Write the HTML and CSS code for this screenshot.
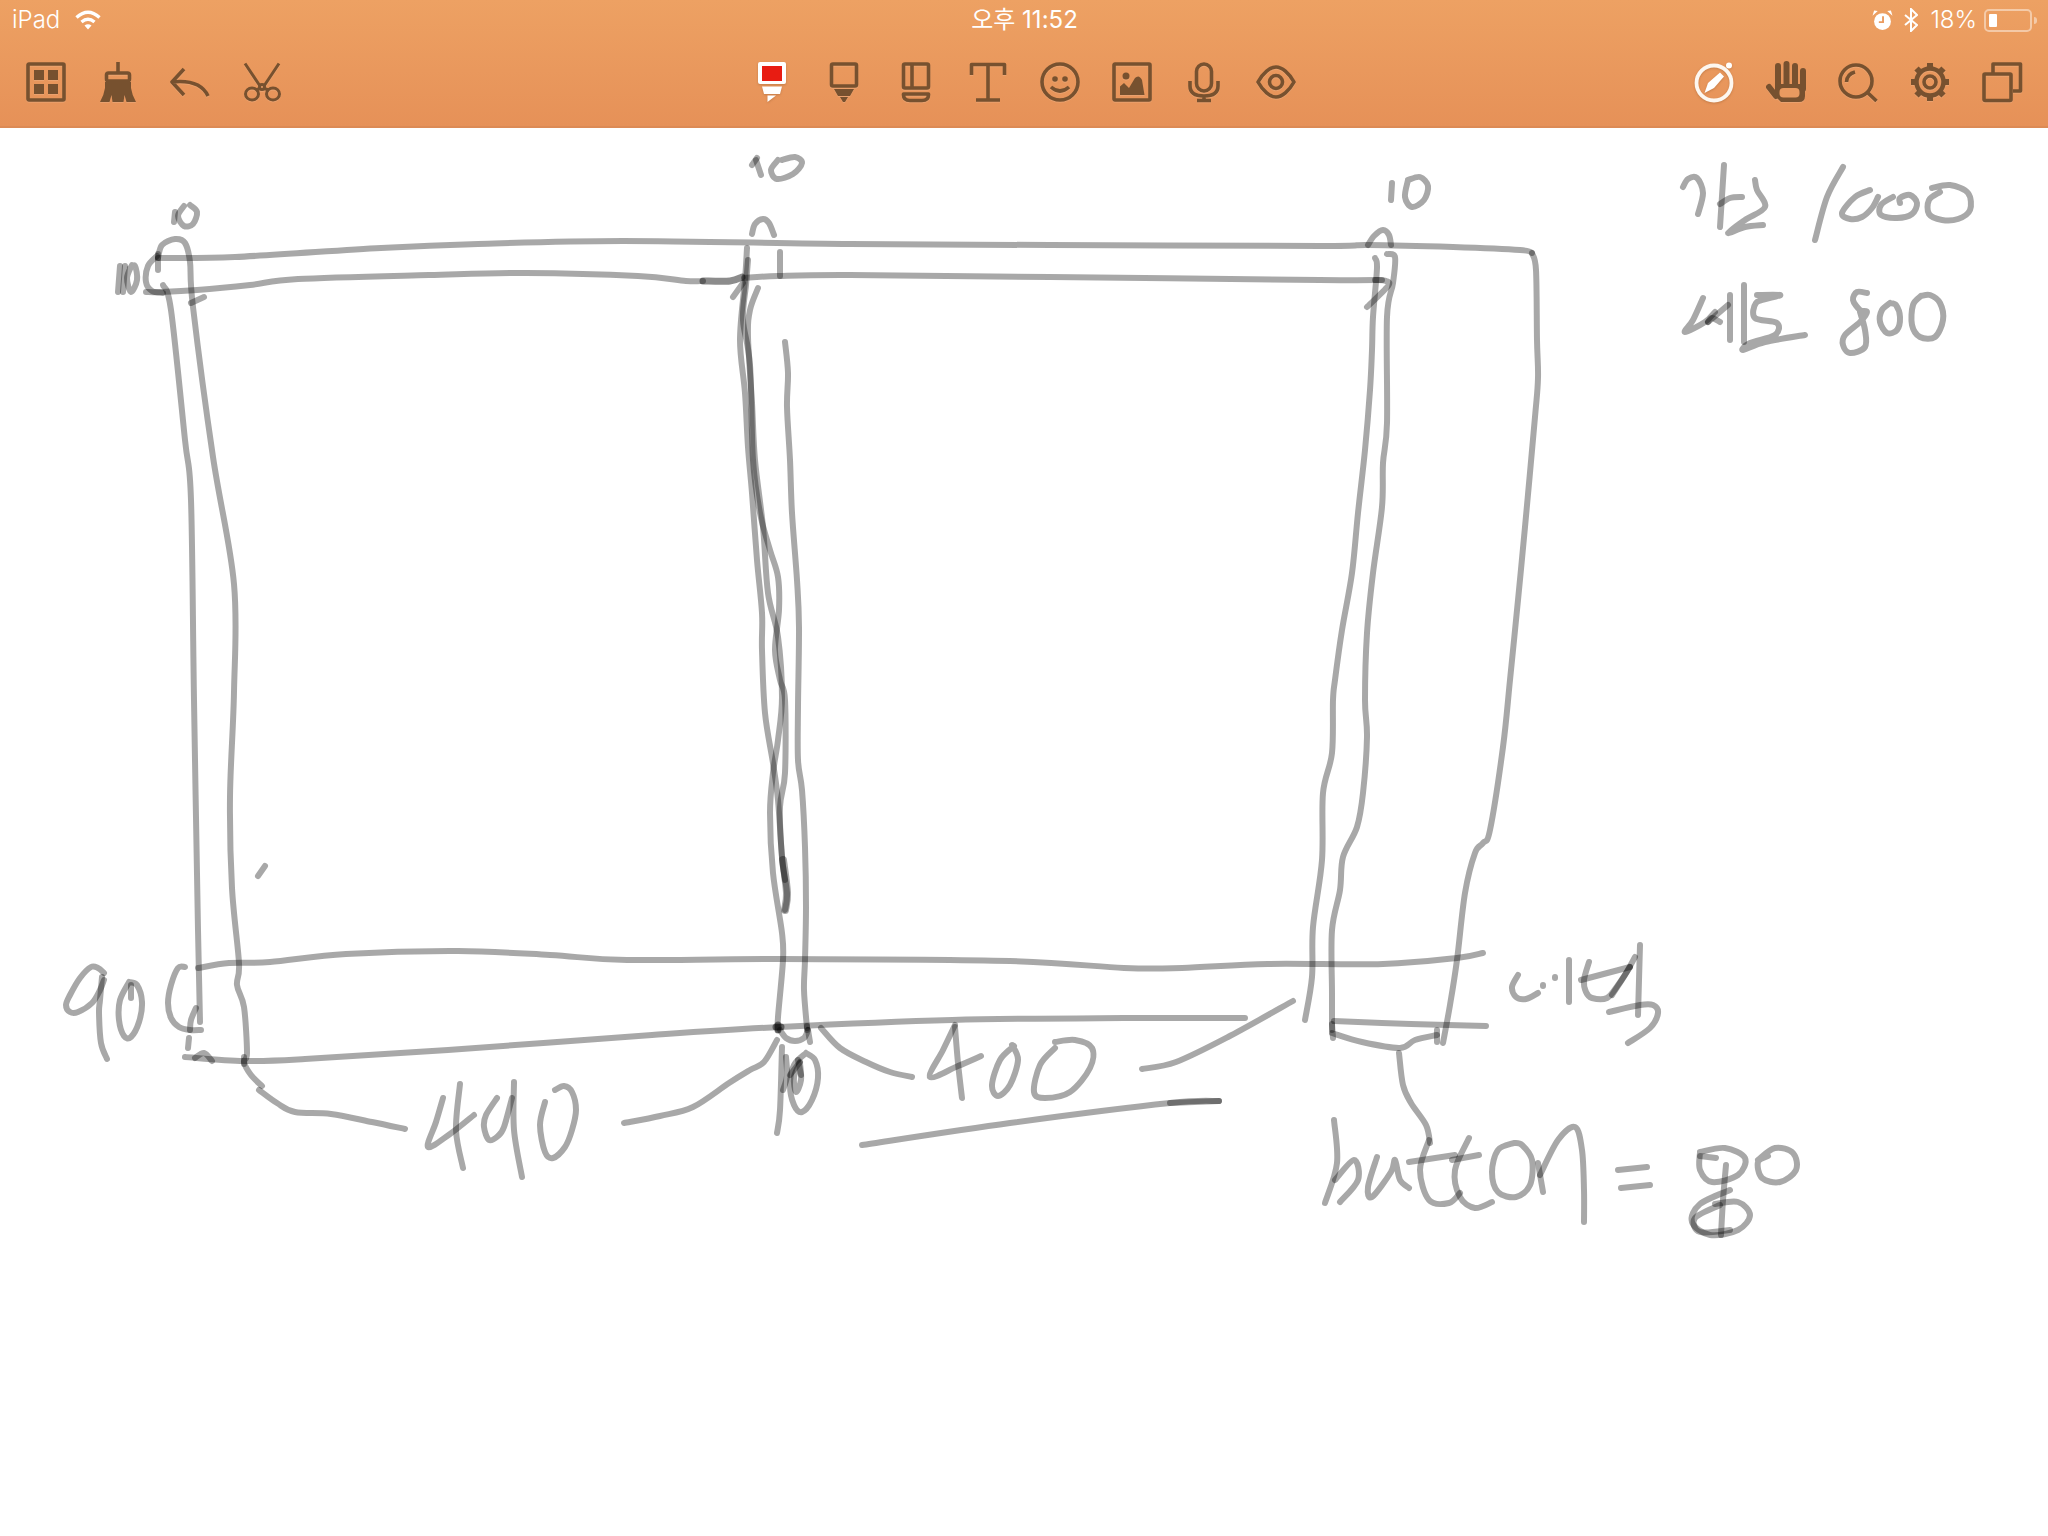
FILE: index.html
```html
<!DOCTYPE html>
<html lang="ko">
<head>
<meta charset="utf-8">
<title>Note</title>
<link rel="stylesheet" href="styles.css">
</head>
<body>
<header class="appbar">
  <div class="status">
    <div class="status-left">
      <span class="status-text">iPad</span>
      <svg class="wifi" viewBox="0 0 28 20"><path class="wifi-arc" d="M2.5 7.5Q14-3 25.500 7.500"/><path class="wifi-arc" d="M7.500 12Q14 6.500 20.500 12"/><path class="wifi-dot" d="M10.500 15.500Q14 13 17.500 15.500L14 19.500Z"/></svg>
    </div>
    <div class="status-text status-time">오후 11:52</div>
    <div class="status-right">
      <svg class="alarm" viewBox="0 0 20 20"><circle class="wh" cx="10" cy="11" r="8"/><path class="wh" d="M0.500 5.500L5.500 1 2 0.500ZM19.500 5.500L14.500 1 18 0.500Z"/><path class="alarm-hand" d="M10.500 6V11.500H6.500"/></svg>
      <svg class="bt" viewBox="0 0 14 24"><path d="M1 7L13 17 7 23V1L13 7 1 17"/></svg>
      <span class="status-text">18%</span>
      <div class="battery"><div class="battery-level"></div></div>
      <div class="battery-nub"></div>
    </div>
  </div>
  <div class="tools">
    <div class="tool-group">
      <button class="tool"><svg class="ic" viewBox="0 0 40 40"><rect x="2" y="2" width="36" height="36" rx="1"/><path class="solid" d="M8 8H18V18H8ZM22 8H32V18H22ZM8 22H18V32H8ZM22 22H32V32H22Z"/></svg></button>
      <button class="tool"><svg class="ic" viewBox="0 0 40 40"><path d="M20 0V10"/><rect x="8.500" y="11" width="23" height="8" rx="2"/><path class="solid" d="M7 20H33V26Q34 33 38 40H28.500L26.500 33 25.500 40H14.500L13.500 33 11.500 40H2Q6 33 7 26Z"/></svg></button>
      <button class="tool"><svg class="ic" viewBox="0 0 40 40"><path d="M14 7L2 20 14 33M2 20Q30 17 38 34"/></svg></button>
      <button class="tool"><svg class="ic ic-thin" viewBox="0 0 40 40"><path d="M3 1.500L18 24M37 1.500L22 24"/><circle cx="20" cy="25" r="2.500"/><ellipse cx="10" cy="32" rx="6.500" ry="6"/><ellipse cx="31" cy="32" rx="6.500" ry="6"/><path d="M18 26.500L13.500 28M22 26.500L27 28"/></svg></button>
    </div>
    <div class="tool-group">
      <button class="tool"><svg class="ic ic-active" viewBox="0 0 40 40"><rect class="wh" x="6" y="0" width="28" height="22" rx="2"/><rect class="red" x="10" y="4" width="20" height="15"/><path class="wh" d="M10 24.500H30L28 32H12ZM15.500 33.500H24L15.500 40Z"/></svg></button>
      <button class="tool"><svg class="ic" viewBox="0 0 40 40"><rect x="7.500" y="2" width="25" height="22" rx="1.500"/><path class="solid" d="M10 27H30L26 34H14ZM16 35H24L21 40H19Z"/></svg></button>
      <button class="tool"><svg class="ic" viewBox="0 0 40 40"><rect x="7.500" y="2" width="25" height="24" rx="1.500"/><path d="M16 2V26"/><path d="M7.500 32H32.500V33Q32.500 38.500 26 38.500H14Q7.500 38.500 7.500 33Z"/></svg></button>
      <button class="tool"><svg class="ic" viewBox="0 0 40 40"><path d="M3.500 13V2.500H36.500V13M20 2.500V38M8 38H32"/></svg></button>
      <button class="tool"><svg class="ic" viewBox="0 0 40 40"><circle cx="20" cy="20" r="18"/><circle class="solid" cx="15" cy="17" r="2.800"/><circle class="solid" cx="25" cy="17" r="2.800"/><path d="M11 25Q20 33 29 25"/></svg></button>
      <button class="tool"><svg class="ic" viewBox="0 0 40 40"><rect x="2" y="2" width="36" height="36" rx="1"/><circle class="solid" cx="14" cy="14" r="3.500"/><path class="solid" d="M8 33V24.500L12 21 17 26 23 16Q27 12 30 18L32.500 33Z"/></svg></button>
      <button class="tool"><svg class="ic" viewBox="0 0 40 40"><rect x="12.500" y="2" width="15" height="27" rx="7.500"/><path d="M6 19V24Q6 34 20 34 34 34 34 24V19M20 34V38.500M13 38.500H27"/></svg></button>
      <button class="tool"><svg class="ic" viewBox="0 0 40 40"><path d="M2 20C7 11 14 5 20 5 26 5 33 11 38 20 33 29 26 35 20 35 14 35 7 29 2 20Z"/><circle cx="20" cy="20" r="6.500"/></svg></button>
    </div>
    <div class="tool-group tool-group-end">
      <button class="tool"><svg class="ic ic-active" viewBox="0 0 40 40"><circle class="wh-ring" cx="20" cy="21" r="17.500"/><circle class="wh" cx="35" cy="3.500" r="3"/><path class="wh" d="M10.500 31L14 21 26 10.500 30 14.500 20 26Z"/></svg></button>
      <button class="tool"><svg class="ic" viewBox="0 0 40 40"><path class="finger" d="M12 4V26M20.500 2V26M29 4V26M37 9V27"/><path class="thumb" d="M3 25L10 34"/><path class="solid" d="M9 22H39V34Q39 40 33 40H15L9 34Z"/><rect class="palm" x="13.500" y="26" width="20" height="9.500" rx="4"/></svg></button>
      <button class="tool"><svg class="ic" viewBox="0 0 40 40"><circle cx="18" cy="19" r="16"/><path d="M30 31L38.500 39M8.500 20Q9 12 17 10"/></svg></button>
      <button class="tool"><svg class="ic" viewBox="0 0 40 40"><circle class="gear-ring" cx="20" cy="20" r="13.500"/><circle cx="20" cy="20" r="6"/><path class="gear-teeth" d="M20 1V6M20 34V39M1 20H6M34 20H39M6.500 6.500L10 10M30 30L33.500 33.500M33.500 6.500L30 10M10 30L6.500 33.500"/></svg></button>
      <button class="tool"><svg class="ic" viewBox="0 0 40 40"><rect x="2" y="12" width="27" height="26.500" rx="1"/><path d="M11 11V2H38.500V29H31"/></svg></button>
    </div>
  </div>
</header>
<main class="canvas">
<svg class="sketch" viewBox="0 128 2048 1408">
<!-- frame: outer top and second top rails -->
<path class="ink" data-p="158,258 235,257 381,248 478,244 623,241 850,244 1050,245 1320,246 1368,245 1453,247 1520,250 1532,253"/>
<path class="ink" data-p="1532,253 1536,270 1537,340 1538,378 1535,417 1525,527 1518,600 1510,680 1503,747 1490,830 1483,843 1475,853 1465,893 1457,960 1450,1005 1443,1043"/>
<path class="ink" data-p="146,292 160,292 197,290 250,285 298,279 429,275 526,273 638,276 686,281 703,281"/>
<path class="ink heavy" data-p="703,281 730,281 742,277"/>
<path class="ink" data-p="744,278 778,276 850,275 1050,277 1320,280 1382,280"/>
<path class="ink" data-p="1375,280 1386,281 1388,286 1367,307"/>
<!-- left rails and corner marks -->
<path class="ink" data-p="163,285 171,310 185,440 191,500 194,700 198,930 200,1022"/>
<path class="ink" data-p="158,258 162,245 175,239 185,243 190,262 193,307 213,457 234,584 234,692 230,797 232,888 239,963 237,985 244,1007 247,1053 244,1062 251,1075 262,1086"/>
<path class="ink" data-p="157,256 148,266 146,282 152,291 163,293"/>
<path class="ink" data-p="158,254 158,270"/>
<path class="ink" data-p="191,303 204,297"/>
<path class="ink" data-p="175,212 174,222"/>
<path class="ink" data-p="184,206 178,216 184,226 193,224 197,212 190,205"/>
<path class="ink" data-p="120,266 118,292"/>
<path class="ink" data-p="125,266 123,292"/>
<path class="ink" data-p="132,265 127,278 131,292 137,280 135,266 130,268"/>
<path class="ink" data-p="258,876 265,866"/>
<!-- middle rails -->
<path class="ink" data-p="756,160 761,175"/>
<path class="ink" data-p="752,165 757,158"/>
<path class="ink" data-p="778,160 771,170 777,179 793,174 802,163 795,157 782,160"/>
<path class="ink" data-p="752,234 755,224 763,219 769,223 774,235"/>
<path class="ink" data-p="780,252 780,276"/>
<path class="ink" data-p="747,248 745,280 740,340 745,393 748,447 752,493 757,560 762,613 762,650 765,713 773,763 778,800 782,857 785,880"/>
<path class="ink" data-p="748,260 746,285 743,320 750,365 753,460 760,513 770,550 778,577 779,610 775,650 780,680 785,700 785,773 780,807 782,857 787,893 785,910"/>
<path class="ink" data-p="758,288 750,310 748,337 752,403 755,460 763,527 768,593 778,637 782,697 778,740 773,773 770,813 773,873 782,933 783,960 778,1017 778,1030"/>
<path class="ink" data-p="785,342 788,373 787,407 790,460 792,513 797,580 799,627 798,707 798,760 802,790 805,847 806,907 805,960 804,990 807,1028"/>
<path class="ink thick" data-p="783,860 787,893 785,910"/>
<path class="ink" data-p="733,297 743,283"/>
<!-- third rails -->
<path class="ink" data-p="1392,183 1391,200"/>
<path class="ink" data-p="1408,180 1405,197 1412,207 1424,200 1428,186 1420,177 1408,180"/>
<path class="ink" data-p="1368,245 1374,236 1383,230 1389,235 1391,245"/>
<path class="ink" data-p="1375,258 1377,268 1373,317 1372,350 1370,390 1365,450 1358,513 1352,573 1342,630 1335,680 1333,700 1332,753 1323,793 1322,860 1313,927 1312,977 1305,1020"/>
<path class="ink" data-p="1387,254 1395,257 1393,283 1387,317 1387,423 1383,463 1382,507 1373,573 1367,633 1365,700 1367,737 1363,793 1357,827 1343,857 1340,890 1332,930 1332,993 1332,1030"/>
<!-- bottom rails -->
<path class="ink" data-p="198,968 229,963 270,962 346,954 458,951 550,955 627,960 780,959 1010,961 1124,968 1182,968 1268,964 1383,964 1457,958 1483,953"/>
<path class="ink" data-p="185,1057 244,1061 305,1059 448,1050 652,1035 780,1027 952,1020 1124,1018 1245,1018"/>
<path class="ink" data-p="1334,1021 1411,1024 1486,1026"/>
<path class="ink" data-p="244,1057 244,1064"/>
<path class="ink heavy" data-p="776,1027 781,1027"/>
<path class="ink heavy" data-p="778,1025 778,1030"/>
<path class="ink" data-p="807,1026 807,1030"/>
<path class="ink" data-p="780,1030 786,1038 795,1041 804,1038 808,1030"/>
<path class="ink" data-p="808,1030 810,1042"/>
<path class="ink" data-p="1332,1024 1333,1038"/>
<!-- 90 label -->
<path class="ink" data-p="104,973 98,968 91,967 80,978 70,995 66,1005 70,1012 78,1012 92,1003 100,990 104,980"/>
<path class="ink" data-p="102,977 100,1000 99,1013 101,1043 107,1059"/>
<path class="ink" data-p="129,982 120,1000 119,1020 124,1036 131,1037 139,1022 142,1002 137,985 129,982"/>
<path class="ink" data-p="131,985 131,998"/>
<path class="ink" data-p="185,967 178,968 171,985 168,1003 171,1018 179,1027 190,1030 201,1030"/>
<path class="ink" data-p="196,1008 191,1020 190,1030"/>
<path class="ink" data-p="189,1038 188,1048"/>
<path class="ink" data-p="195,1058 204,1053 212,1061"/>
<!-- 440 with brackets -->
<path class="ink" data-p="259,1090 277,1103 295,1112 331,1114 372,1122 405,1129"/>
<path class="ink" data-p="624,1123 660,1116 693,1107 729,1083 750,1070 764,1062 777,1040"/>
<path class="ink" data-p="443,1098 436,1122 428,1147 450,1134 474,1115"/>
<path class="ink" data-p="460,1084 456,1130 463,1168"/>
<path class="ink" data-p="497,1098 486,1115 484,1127 489,1140 498,1136 504,1127 512,1098"/>
<path class="ink" data-p="514,1082 514,1130 522,1177"/>
<path class="ink" data-p="555,1090 564,1086 572,1092 576,1110 572,1130 565,1147 553,1158 545,1152 540,1125 545,1102"/>
<!-- 10 bottom -->
<path class="ink" data-p="782,1047 780,1110 777,1133"/>
<path class="ink" data-p="786,1057 787,1076 783,1090"/>
<path class="ink" data-p="806,1053 794,1065 790,1085 794,1105 802,1112 812,1100 818,1078 815,1060 806,1053"/>
<path class="ink" data-p="800,1063 794,1077 796,1092 801,1080 800,1063"/>
<path class="ink" data-p="790,1075 800,1062"/>
<path class="ink" data-p="798,1060 801,1075"/>
<!-- 400 with brackets -->
<path class="ink" data-p="821,1028 840,1048 866,1062 890,1072 912,1077"/>
<path class="ink" data-p="1142,1069 1176,1062 1228,1037 1293,1001"/>
<path class="ink" data-p="955,1025 943,1050 930,1077 958,1066 981,1056"/>
<path class="ink" data-p="955,1027 958,1063 962,1098"/>
<path class="ink" data-p="1014,1046 1000,1060 992,1085 998,1096 1010,1085 1018,1060 1012,1045"/>
<path class="ink" data-p="1055,1042 1075,1040 1092,1048 1090,1068 1070,1092 1045,1098 1034,1092 1040,1065 1055,1048"/>
<path class="ink" data-p="862,1145 1010,1123 1170,1103 1219,1101"/>
<path class="ink" data-p="1170,1103 1219,1101"/>
<!-- margin note -->
<path class="ink" data-p="1518,975 1512,987 1516,997 1526,999 1538,993"/>
<path class="ink" data-p="1543,985 1543,986"/>
<path class="ink" data-p="1555,977 1555,978"/>
<path class="ink" data-p="1569,960 1569,1002"/>
<path class="ink" data-p="1589,962 1584,980 1586,992 1592,998 1607,998 1618,985 1630,967"/>
<path class="ink" data-p="1581,980 1630,967"/>
<path class="ink" data-p="1612,995 1625,975 1635,957"/>
<path class="ink" data-p="1640,945 1638,1015"/>
<path class="ink" data-p="1609,1012 1640,1005 1653,1005 1658,1013 1650,1028 1628,1043"/>
<!-- button = 80 -->
<path class="ink" data-p="1332,1033 1362,1042 1400,1048 1415,1040 1437,1035"/>
<path class="ink" data-p="1437,1030 1437,1042"/>
<path class="ink" data-p="1399,1053 1403,1085 1411,1103 1426,1125 1430,1143"/>
<path class="ink" data-p="1334,1120 1337,1163 1325,1203"/>
<path class="ink" data-p="1335,1180 1354,1160 1358,1180 1340,1202"/>
<path class="ink" data-p="1377,1157 1368,1187 1372,1197 1391,1172 1395,1160 1400,1180 1409,1188"/>
<path class="ink" data-p="1429,1140 1420,1170 1429,1200 1449,1203 1460,1193"/>
<path class="ink" data-p="1409,1162 1455,1155"/>
<path class="ink" data-p="1469,1138 1455,1170 1460,1197 1475,1208 1492,1202"/>
<path class="ink" data-p="1452,1160 1479,1155"/>
<path class="ink" data-p="1514,1143 1498,1150 1492,1172 1498,1192 1516,1197 1530,1185 1532,1160 1522,1145 1514,1143"/>
<path class="ink" data-p="1538,1163 1543,1192"/>
<path class="ink" data-p="1540,1175 1558,1140 1575,1127 1582,1150 1584,1190 1584,1222"/>
<path class="ink" data-p="1618,1170 1647,1167"/>
<path class="ink" data-p="1621,1188 1650,1185"/>
<path class="ink" data-p="1700,1152 1725,1148 1745,1158 1738,1175 1712,1182 1700,1170 1700,1152"/>
<path class="ink" data-p="1700,1156 1716,1158"/>
<path class="ink" data-p="1726,1165 1723,1200 1721,1235"/>
<path class="ink" data-p="1730,1190 1700,1204 1692,1222 1710,1235 1738,1230 1750,1215 1738,1202 1715,1204"/>
<path class="ink" data-p="1720,1205 1695,1218 1700,1232 1730,1230"/>
<path class="ink" data-p="1758,1160 1775,1148 1793,1153 1796,1170 1780,1182 1762,1178 1758,1162 1768,1156"/>
<!-- width / height note -->
<path class="ink" data-p="1683,187 1688,179 1697,178 1703,193 1698,214"/>
<path class="ink" data-p="1724,165 1720,227"/>
<path class="ink" data-p="1720,204 1730,198 1742,197"/>
<path class="ink" data-p="1755,180 1757,190 1765,207 1745,220 1728,233 1745,227 1763,225"/>
<path class="ink" data-p="1843,167 1827,197 1815,240"/>
<path class="ink" data-p="1870,190 1855,197 1842,213 1850,219 1862,217 1872,208 1878,197"/>
<path class="ink" data-p="1893,197 1881,205 1881,215 1897,218 1912,214 1917,203 1910,195 1900,198 1900,203"/>
<path class="ink" data-p="1940,192 1929,200 1929,214 1942,220 1958,219 1970,210 1968,193 1950,185 1932,188"/>
<path class="ink" data-p="1703,298 1693,320 1685,332 1705,322 1715,312"/>
<path class="ink" data-p="1708,322 1712,318 1720,322"/>
<path class="ink" data-p="1708,322 1728,305"/>
<path class="ink" data-p="1730,295 1730,340"/>
<path class="ink" data-p="1744,285 1744,342"/>
<path class="ink" data-p="1757,295 1780,295 1770,298 1756,303 1755,318 1777,323 1775,335 1750,343 1743,350 1765,342 1805,335"/>
<path class="ink" data-p="1867,293 1857,292 1853,300 1860,310 1867,312 1860,322 1845,335 1843,345 1850,353 1865,347 1865,330 1860,312"/>
<path class="ink" data-p="1890,303 1882,310 1880,322 1887,333 1897,330 1900,317 1896,305 1890,303"/>
<path class="ink" data-p="1921,296 1913,305 1912,325 1920,337 1935,337 1943,320 1940,303 1930,295 1921,296"/>
</svg>
</main>
<script src="sketch.js"></script>
</body>
</html>
```
FILE: styles.css
```css
* { box-sizing: border-box; }
html, body { margin: 0; padding: 0; background: #fff; }
body { width: 2048px; height: 1536px; overflow: hidden; font-family: Inter, "Noto Sans CJK KR", "Liberation Sans", sans-serif; }

.appbar {
  height: 128px;
  background: linear-gradient(#eda163, #e69158);
  border-bottom: 2px solid #dc8a55;
  box-shadow: 0 1px 4px rgba(0, 0, 0, .12);
}

.status {
  height: 40px;
  display: grid;
  grid-template-columns: 1fr auto 1fr;
  align-items: center;
  padding: 0 11px 0 12px;
  color: #fff;
}
.status-left, .status-right { display: flex; align-items: center; }
.status-right { justify-content: flex-end; }
.status-text { font-size: 24px; font-weight: 300; line-height: 40px; color: #fff; }
.status-time { font-weight: 400; }

.wifi { width: 28px; height: 20px; margin-left: 14px; margin-top: -1px; }
.wifi-arc { fill: none; stroke: #fff; stroke-width: 3.4; }
.wifi-dot { fill: #fff; }

.alarm { width: 21px; height: 21px; margin-right: 11px; }
.alarm-hand { fill: none; stroke: #eb9c60; stroke-width: 1.8; }
.bt { width: 14px; height: 24px; margin-right: 12px; }
.bt path { fill: none; stroke: #fff; stroke-width: 2; }
.battery { width: 48px; height: 23px; margin-left: 7px; padding: 3px; border: 2px solid rgba(255, 255, 255, .45); border-radius: 5px; }
.battery-level { width: 8px; height: 100%; background: #fff; border-radius: 1px; }
.battery-nub { width: 3px; height: 7px; margin-left: 2px; background: rgba(255, 255, 255, .45); border-radius: 0 3px 3px 0; }

.tools { display: grid; grid-template-columns: 1fr auto 1fr; padding: 0 10px; height: 84px; }
.tool-group { display: flex; }
.tool-group-end { justify-content: flex-end; }
.tool { width: 72px; height: 84px; padding: 0; border: 0; background: none; display: flex; align-items: center; justify-content: center; }

.ic {
  width: 40px;
  height: 40px;
  overflow: visible;
  fill: none;
  stroke: #77512f;
  stroke-width: 3.6;
  stroke-linejoin: round;
  filter: drop-shadow(0 1px 0 rgba(255, 255, 255, .12));
}
.ic-thin { stroke-width: 3; }
.ic-active { stroke: none; filter: drop-shadow(0 1px 1px rgba(120, 70, 30, .3)); }
.ic .solid { fill: #77512f; stroke: none; }
.wh { fill: #fff; stroke: none; }
.wh-ring { fill: none; stroke: #fdf7f0; stroke-width: 3.8; }
.red { fill: #e81c12; }
.finger { stroke-width: 6; stroke-linecap: round; }
.thumb { stroke-width: 6; stroke-linecap: round; }
.palm { fill: #e99a60; stroke: none; }
.gear-ring { stroke-width: 4.5; }
.gear-teeth { stroke-width: 6; }

.canvas { height: 1408px; background: #fff; }
.sketch { display: block; width: 2048px; height: 1408px; }
.ink { fill: none; stroke: #000; stroke-opacity: .34; stroke-width: 6; stroke-linecap: round; stroke-linejoin: round; }
.heavy { stroke-width: 7; stroke-opacity: .45; }
.thick { stroke-width: 8; }
```
FILE: sketch.js
```js
// Turns each ink stroke's sampled points into a smooth pen path.
document.querySelectorAll('.ink').forEach(function (stroke) {
  var p = stroke.dataset.p.split(' ').map(function (pair) {
    return pair.split(',').map(Number);
  });
  var d = 'M' + p[0].join(' ');
  for (var i = 0; i < p.length - 1; i++) {
    var a = p[i - 1] || p[i], b = p[i], c = p[i + 1], e = p[i + 2] || c;
    d += 'C' + (b[0] + (c[0] - a[0]) / 6) + ' ' + (b[1] + (c[1] - a[1]) / 6) +
         ' ' + (c[0] - (e[0] - b[0]) / 6) + ' ' + (c[1] - (e[1] - b[1]) / 6) +
         ' ' + c[0] + ' ' + c[1];
  }
  stroke.setAttribute('d', d);
});
```
